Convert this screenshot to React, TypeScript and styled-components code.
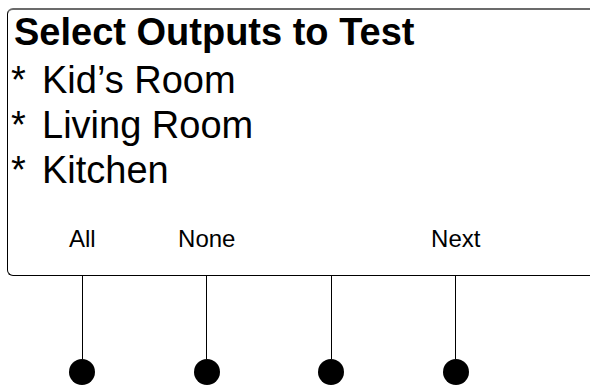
import React from "react";
import styled, { createGlobalStyle } from "styled-components";

const GlobalStyle = createGlobalStyle`
  html, body {
    margin: 0;
    padding: 0;
    background: #ffffff;
  }
`;

const Page = styled.div`
  width: 590px;
  height: 385px;
  overflow: hidden;
  padding: 8px 0 0 7px;
  box-sizing: border-box;
  font-family: "Liberation Sans", Arial, sans-serif;
  color: #000;
`;

const Screen = styled.div`
  width: 700px;
  height: 265px;
  border: 1px solid #000;
  border-top: 2px solid #6b6b6b;
  border-right: none;
  border-radius: 6px 0 0 6px;
  padding: 0 0 0 1px;
  display: flex;
  flex-direction: column;
`;

const Title = styled.div`
  font-size: 38px;
  font-weight: 700;
  line-height: 45px;
  padding-left: 5px;
  margin-bottom: 3px;
`;

const Item = styled.div`
  display: flex;
  font-size: 38px;
  line-height: 45px;
`;

const Star = styled.span`
  width: 31px;
  padding-left: 2px;
`;

const SoftKeys = styled.div`
  display: grid;
  grid-template-columns: repeat(4, 124.5px);
  padding-left: 11px;
  margin-top: 34px;
`;

const KeyLabel = styled.div`
  text-align: center;
  font-size: 24px;
  line-height: 24px;
`;

const Connectors = styled.div`
  display: grid;
  grid-template-columns: repeat(4, 124.5px);
  margin-left: 13px;
`;

const Connector = styled.div`
  display: flex;
  flex-direction: column;
  align-items: center;
`;

const Wire = styled.div`
  width: 1px;
  height: 83px;
  background: #000;
`;

const Button = styled.div`
  width: 26px;
  height: 26px;
  border-radius: 50%;
  background: #000;
`;

const items = ["Kid\u2019s Room", "Living Room", "Kitchen"];
const keys = ["All", "None", "", "Next"];

export default function App() {
  return (
    <>
      <GlobalStyle />
      <Page>
        <Screen>
          <Title>Select Outputs to Test</Title>
          {items.map((name) => (
            <Item key={name}>
              <Star>*</Star>
              <span>{name}</span>
            </Item>
          ))}
          <SoftKeys>
            {keys.map((k, i) => (
              <KeyLabel key={i}>{k}</KeyLabel>
            ))}
          </SoftKeys>
        </Screen>
        <Connectors>
          {keys.map((_, i) => (
            <Connector key={i}>
              <Wire />
              <Button />
            </Connector>
          ))}
        </Connectors>
      </Page>
    </>
  );
}
